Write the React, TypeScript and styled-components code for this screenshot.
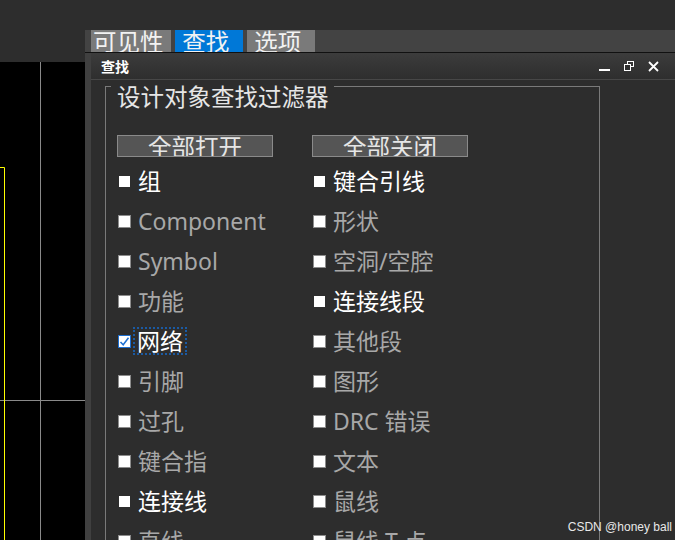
import styled, { createGlobalStyle } from 'styled-components';

type Item = { label: string; bright?: boolean; checked?: boolean };

const leftItems: Item[] = [
  { label: '组', bright: true },
  { label: 'Component' },
  { label: 'Symbol' },
  { label: '功能' },
  { label: '网络', bright: true, checked: true },
  { label: '引脚' },
  { label: '过孔' },
  { label: '键合指' },
  { label: '连接线', bright: true },
  { label: '直线' },
];

const rightItems: Item[] = [
  { label: '键合引线', bright: true },
  { label: '形状' },
  { label: '空洞/空腔' },
  { label: '连接线段', bright: true },
  { label: '其他段' },
  { label: '图形' },
  { label: 'DRC 错误' },
  { label: '文本' },
  { label: '鼠线' },
  { label: '鼠线 T 点' },
];

const GlobalStyle = createGlobalStyle`
  html, body {
    margin: 0;
    padding: 0;
    background: #2d2d2d;
    overflow: hidden;
  }
  * {
    box-sizing: border-box;
  }
`;

const Page = styled.div`
  position: relative;
  width: 675px;
  height: 540px;
  display: flex;
  overflow: hidden;
  background: #2d2d2d;
  font-family: 'Noto Sans', 'Noto Sans CJK SC', sans-serif;
`;

const LeftSide = styled.div`
  width: 85px;
  display: flex;
  flex-direction: column;
`;

const TopSpacer = styled.div<{ $h: number }>`
  height: ${(p) => p.$h}px;
  flex-shrink: 0;
`;

const Canvas = styled.div`
  flex: 1;
  background: #000;
`;

const RightSide = styled.div`
  flex: 1;
  display: flex;
  flex-direction: column;
  min-height: 0;
`;

const Dock = styled.div`
  flex: 1;
  display: flex;
  flex-direction: column;
  background: #404040;
  min-height: 0;
`;

const TabBar = styled.div`
  height: 23px;
  flex-shrink: 0;
  display: flex;
  gap: 4px;
  padding-left: 6px;
  background: #434343;
  border-bottom: 1px solid #111;
`;

const Tab = styled.div<{ $active?: boolean; $w: number }>`
  width: ${(p) => p.$w}px;
  height: 22px;
  overflow: hidden;
  padding-left: 2px;
  background: ${(p) => (p.$active ? '#0078d7' : '#7a7a7a')};
  color: #f2f2f2;
  font-family: 'Noto Sans CJK SC', sans-serif;
  font-size: 23.5px;
  line-height: 23px;
  white-space: nowrap;
`;

const Window = styled.div`
  flex: 1;
  min-height: 0;
  margin-left: 6px;
  background: #2d2d2d;
  display: flex;
  flex-direction: column;
`;

const TitleBar = styled.div`
  height: 27px;
  flex-shrink: 0;
  display: flex;
  align-items: center;
  padding: 0 16px 0 10px;
  background: linear-gradient(#3c3c3c, #2e2e2e);
  border-bottom: 1px solid #474747;
`;

const Title = styled.div`
  flex: 1;
  color: #fff;
  font-family: 'Noto Sans CJK SC', sans-serif;
  font-weight: 700;
  font-size: 14px;
`;

const TitleIcons = styled.div`
  display: flex;
  align-items: center;
  gap: 14px;
`;

const Content = styled.div`
  flex: 1;
  min-height: 0;
  padding: 6px 0 0 14px;
  overflow: hidden;
`;

const GroupBox = styled.div`
  width: 495px;
  height: 520px;
  border-left: 1px solid #7a7a7a;
  border-right: 1px solid #7a7a7a;
`;

const GroupHead = styled.div`
  display: flex;
  align-items: flex-start;
  height: 49px;
`;

const HeadTick = styled.div`
  width: 5px;
  border-top: 1px solid #7a7a7a;
`;

const HeadLine = styled.div`
  flex: 1;
  border-top: 1px solid #7a7a7a;
`;

const GroupTitle = styled.div`
  margin: -2px 5px 0 6px;
  color: #e6e6e6;
  font-family: 'Noto Sans CJK SC', sans-serif;
  font-size: 23.5px;
  line-height: 24px;
`;

const Grid = styled.div`
  display: grid;
  grid-template-columns: 195px 195px;
  align-items: start;
  padding-left: 11px;
`;

const ButtonRow = styled.div`
  grid-column: 1 / 3;
  display: grid;
  grid-template-columns: 195px 195px;
  height: 26px;
`;

const Button = styled.div`
  width: 156px;
  height: 22px;
  background: #555;
  border: 1px solid #8a8a8a;
  color: #e6e6e6;
  font-family: 'Noto Sans CJK SC', sans-serif;
  font-size: 23.5px;
  line-height: 20px;
  text-align: center;
  overflow: hidden;
`;

const Column = styled.div`
  display: flex;
  flex-direction: column;
`;

const Row = styled.div`
  height: 40px;
  flex-shrink: 0;
  display: flex;
  align-items: center;
  gap: 7px;
  padding-left: 1px;
`;

const Box = styled.div<{ $bright?: boolean; $checked?: boolean }>`
  width: 13px;
  height: 13px;
  flex-shrink: 0;
  display: flex;
  align-items: center;
  justify-content: center;
  background: #fff;
  border: ${(p) =>
    p.$checked ? '1px solid #1e6fd0' : p.$bright ? '1px solid #2d2d2d' : '1px solid #8c8c8c'};
`;

const Label = styled.span<{ $bright?: boolean; $focus?: boolean }>`
  color: ${(p) => (p.$bright ? '#ffffff' : '#a8a8a8')};
  font-family: 'Noto Sans', 'Noto Sans CJK SC', sans-serif;
  font-size: 23px;
  line-height: 28px;
  white-space: nowrap;
  margin-left: ${(p) => (p.$focus ? '-5px' : '0')};
  padding: 0 ${(p) => (p.$focus ? '4px' : '0')};
  outline: ${(p) => (p.$focus ? '2px dotted #1b5aa3' : 'none')};
  outline-offset: -2px;
`;

const Watermark = styled.div`
  position: absolute;
  right: 3px;
  bottom: 6px;
  color: #e8e8e8;
  font-family: 'Liberation Sans', Arial, sans-serif;
  font-size: 12px;
`;

const CanvasLines = () => (
  <svg width="85" height="478" style={{ display: 'block' }}>
    <line x1="40.5" y1="0" x2="40.5" y2="478" stroke="#8a8a8a" strokeWidth="1" />
    <line x1="0" y1="338.5" x2="85" y2="338.5" stroke="#8a8a8a" strokeWidth="1" />
    <polyline points="0,105.5 4.5,105.5 4.5,478" fill="none" stroke="#ffff00" strokeWidth="1" />
  </svg>
);

const MinIcon = () => (
  <svg width="11" height="12" viewBox="0 0 11 12">
    <rect x="0" y="9" width="11" height="2" fill="#fff" />
  </svg>
);

const RestoreIcon = () => (
  <svg width="10" height="10" viewBox="0 0 10 10">
    <rect x="3.5" y="0.5" width="6" height="5" fill="none" stroke="#fff" />
    <rect x="0.5" y="3.5" width="6" height="6" fill="#2f2f2f" stroke="#fff" />
  </svg>
);

const CloseIcon = () => (
  <svg width="11" height="11" viewBox="0 0 11 11">
    <path d="M1 1 L10 10 M10 1 L1 10" stroke="#fff" strokeWidth="1.8" />
  </svg>
);

const CheckMark = () => (
  <svg width="11" height="11" viewBox="0 0 11 11">
    <path d="M1.5 6 L4.2 8.8 L9.5 1.8" fill="none" stroke="#1e6fd0" strokeWidth="1.5" />
  </svg>
);

const ItemRow = ({ item }: { item: Item }) => (
  <Row>
    <Box $bright={item.bright} $checked={item.checked}>
      {item.checked && <CheckMark />}
    </Box>
    <Label $bright={item.bright} $focus={item.checked}>
      {item.label}
    </Label>
  </Row>
);

export default function App() {
  return (
    <Page>
      <GlobalStyle />
      <LeftSide>
        <TopSpacer $h={62} />
        <Canvas>
          <CanvasLines />
        </Canvas>
      </LeftSide>
      <RightSide>
        <TopSpacer $h={30} />
        <Dock>
          <TabBar>
            <Tab $w={80}>可见性</Tab>
            <Tab $w={68} $active>
              &nbsp;查找
            </Tab>
            <Tab $w={68}>&nbsp;选项</Tab>
          </TabBar>
          <Window>
            <TitleBar>
              <Title>查找</Title>
              <TitleIcons>
                <MinIcon />
                <RestoreIcon />
                <CloseIcon />
              </TitleIcons>
            </TitleBar>
            <Content>
              <GroupBox>
                <GroupHead>
                  <HeadTick />
                  <GroupTitle>设计对象查找过滤器</GroupTitle>
                  <HeadLine />
                </GroupHead>
                <Grid>
                  <ButtonRow>
                    <Button>全部打开</Button>
                    <Button>全部关闭</Button>
                  </ButtonRow>
                  <Column>
                    {leftItems.map((item) => (
                      <ItemRow key={item.label} item={item} />
                    ))}
                  </Column>
                  <Column>
                    {rightItems.map((item) => (
                      <ItemRow key={item.label} item={item} />
                    ))}
                  </Column>
                </Grid>
              </GroupBox>
            </Content>
          </Window>
        </Dock>
      </RightSide>
      <Watermark>CSDN @honey ball</Watermark>
    </Page>
  );
}
